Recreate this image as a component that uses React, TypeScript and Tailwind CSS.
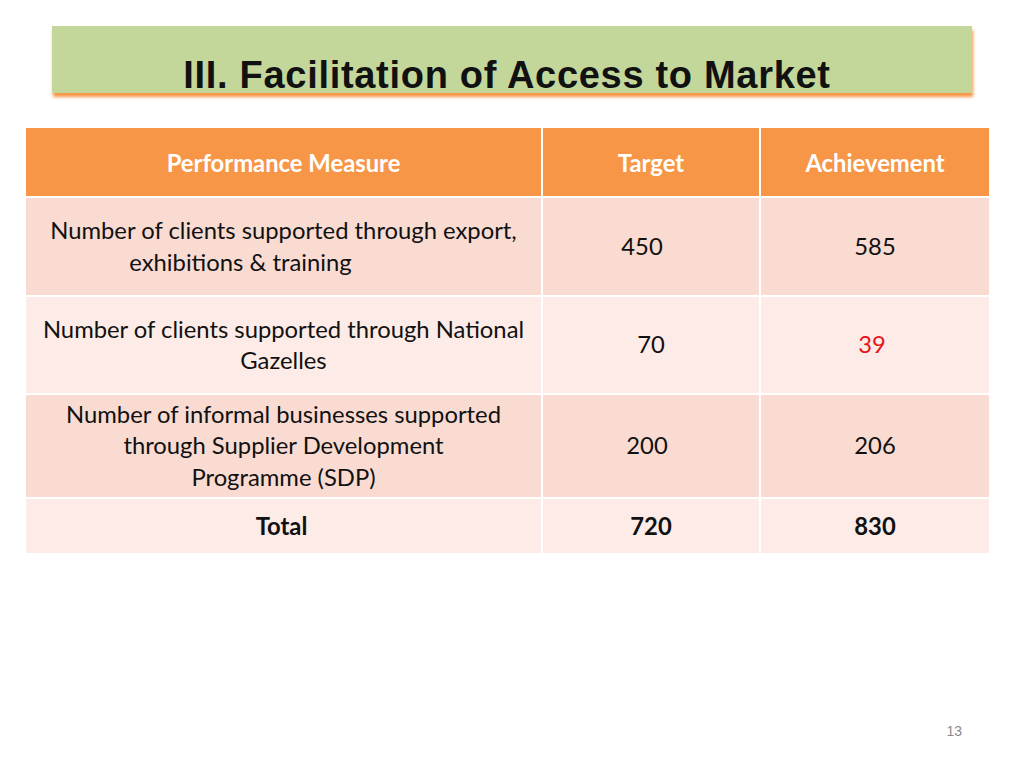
const rows = [
  {
    measure: (
      <>
        Number of clients supported through export,
        <br />
        <span className="mr-[86px]">exhibitions &amp; training</span>
      </>
    ),
    target: '450',
    targetCls: 'mr-[18px]',
    achieved: '585',
    achievedCls: '',
    bg: 'bg-[#f9dbd1]',
    h: 'h-[97px]',
  },
  {
    measure: (
      <>
        Number of clients supported through National
        <br />
        Gazelles
      </>
    ),
    target: '70',
    targetCls: '',
    achieved: '39',
    achievedCls: 'text-[#e8141b] mr-[6px]',
    bg: 'bg-[#fcebe6]',
    h: 'h-[96px]',
  },
  {
    measure: (
      <>
        Number of informal businesses supported
        <br />
        through Supplier Development
        <br />
        Programme (SDP)
      </>
    ),
    target: '200',
    targetCls: 'mr-[8px]',
    achieved: '206',
    achievedCls: '',
    bg: 'bg-[#f9dbd1]',
    h: 'h-[102px]',
  },
];

export default function App() {
  return (
    <div className="w-[1024px] h-[768px] bg-white flex flex-col font-['Lato',sans-serif]">
      {/* Title banner */}
      <div className="mt-[26px] ml-[52px] w-[920px] h-[67px] bg-[#c4d79b] shadow-[1px_4px_3px_#f79646] flex justify-center">
        <h1 className="mt-[30px] mr-[10px] text-[38px] leading-none tracking-[0.7px] font-bold text-[#111] font-['Liberation_Sans',Arial,sans-serif]">
          III. Facilitation of Access to Market
        </h1>
      </div>

      {/* Table */}
      <div className="mt-[35px] ml-[26px] w-[963px] grid grid-cols-[515px_216px_228px] gap-[2px] bg-white text-[23.8px] leading-[31.5px] text-[#111]">
        <div className="h-[68px] pt-[3px] bg-[#f79646] text-white font-bold flex items-center justify-center">
          Performance Measure
        </div>
        <div className="h-[68px] pt-[3px] bg-[#f79646] text-white font-bold flex items-center justify-center">
          Target
        </div>
        <div className="h-[68px] pt-[3px] bg-[#f79646] text-white font-bold flex items-center justify-center">
          Achievement
        </div>

        {rows.map((r, i) => (
          <div key={i} className="contents">
            <div className={`${r.h} ${r.bg} flex items-center justify-center text-center`}>
              <p>{r.measure}</p>
            </div>
            <div className={`${r.h} ${r.bg} flex items-center justify-center`}>
              <span className={r.targetCls}>{r.target}</span>
            </div>
            <div className={`${r.h} ${r.bg} flex items-center justify-center`}>
              <span className={r.achievedCls}>{r.achieved}</span>
            </div>
          </div>
        ))}

        <div className="h-[54px] pt-[2px] bg-[#fcebe6] font-bold flex items-center justify-center">
          <span className="mr-[4px]">Total</span>
        </div>
        <div className="h-[54px] pt-[2px] bg-[#fcebe6] font-bold flex items-center justify-center">720</div>
        <div className="h-[54px] pt-[2px] bg-[#fcebe6] font-bold flex items-center justify-center">830</div>
      </div>

      <div className="mt-auto mb-[26px] mr-[62px] self-end text-[14px] text-[#8a8a8a] font-['Liberation_Sans',Arial,sans-serif]">
        13
      </div>
    </div>
  );
}
